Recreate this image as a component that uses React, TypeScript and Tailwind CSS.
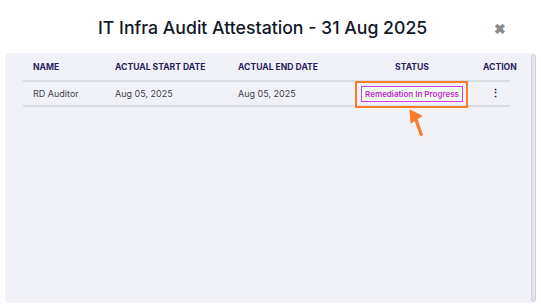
import React from "react";

const COLS = "grid grid-cols-[82px_123px_122px_124px_32px]";

export default function App() {
  return (
    <div className="w-[541px] h-[305px] bg-white overflow-hidden" style={{ fontFamily: "Inter, 'Noto Sans', sans-serif" }}>
      <div className="relative h-[53px] flex items-center">
        <h1 className="pl-[98px] pt-[3px] text-[17.7px] font-medium text-[#111827]">
          IT Infra Audit Attestation - 31 Aug 2025
        </h1>
        <span className="absolute left-[494px] top-[18px] text-[14px] font-bold text-[#8a8a8a]">✖</span>
      </div>

      <div className="mx-[5px] h-[250px] rounded-[5px] bg-[#f1f2f7] flex">
        <div className="flex-1 pl-[18px] pr-[21px]">
          <div className={`${COLS} h-[29px] items-center border-b-2 border-[#dcdde3] text-[8.6px] font-bold text-[#2a1b5e] pt-[1px]`}>
            <div className="pl-[10px]">NAME</div>
            <div className="pl-[10px]">ACTUAL START DATE</div>
            <div className="pl-[10px]">ACTUAL END DATE</div>
            <div className="text-center">STATUS</div>
            <div className="pl-[9px] whitespace-nowrap">ACTION</div>
          </div>
          <div className={`${COLS} h-[25px] items-center border-b-2 border-[#dcdde3] text-[9px] text-[#3f3f4a]`}>
            <div className="pl-[10px]">RD Auditor</div>
            <div className="pl-[10px]">Aug 05, 2025</div>
            <div className="pl-[10px]">Aug 05, 2025</div>
            <div className="flex justify-center">
              <div className="relative">
                <span className="block border border-[#d83fe0] bg-[#f1ffee] px-[3px] leading-[14px] text-[8px] font-semibold text-[#c026d3] whitespace-nowrap">
                  Remediation In Progress
                </span>
                <div className="absolute -left-[6px] -right-[5px] -top-[5px] -bottom-[6px] border-2 border-[#fb7d2a]" />
                <svg className="absolute left-[46px] top-[23px]" width="22" height="30" viewBox="0 0 22 30">
                  <path d="M3 1 L15 7 L10 10 L15.5 26 L13.5 27 L8 11.5 L4 14 Z" fill="#fb7d2a" stroke="#fb7d2a" strokeWidth="1" strokeLinejoin="round" />
                </svg>
              </div>
            </div>
            <div className="pl-[16px] text-[11px] font-bold text-[#2a1b5e] leading-none">⋮</div>
          </div>
        </div>
        <div className="w-[5px] my-[1px] rounded-full bg-[#e4e4ea] border border-[#cfcfd6]" />
      </div>
    </div>
  );
}
